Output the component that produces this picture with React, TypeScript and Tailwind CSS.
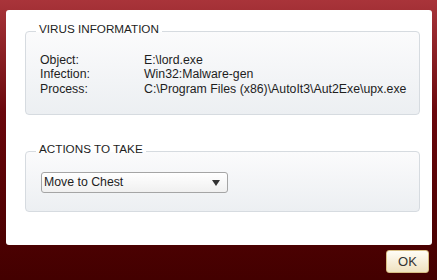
export default function App() {
  return (
    <div className="w-[437px] h-[280px] bg-gradient-to-b from-[#a9343a] via-[#6a070c] via-40% to-[#430000] pt-[10px] pl-[6px] pr-[5px] font-['Liberation_Sans',Arial,sans-serif] text-[12.3px] text-[#1e1e1e] flex flex-col">
      <div className="h-[235px] bg-white rounded-[3px] pt-[12px] pl-[19px] pr-[12px] flex flex-col">
        <GroupBox title="VIRUS INFORMATION" className="h-[93px]">
          <div className="grid grid-cols-[104px_1fr] pl-[4px] pt-[12px] leading-[14.3px]">
            <span>Object:</span>
            <span>E:\lord.exe</span>
            <span>Infection:</span>
            <span>Win32:Malware-gen</span>
            <span>Process:</span>
            <span>C:\Program Files (x86)\AutoIt3\Aut2Exe\upx.exe</span>
          </div>
        </GroupBox>

        <GroupBox title="ACTIONS TO TAKE" className="h-[70px] mt-[27px]">
          <div className="pl-[5px] pt-[11px]">
            <div className="w-[187px] h-[21px] rounded-[3px] border border-[#a5a5a5] bg-gradient-to-b from-white to-[#f0f0f0] flex items-center justify-between pl-[2px] pr-[7px]">
              <span>Move to Chest</span>
              <svg width="8" height="6" viewBox="0 0 8 6">
                <path d="M0 0 H8 L4 6 Z" fill="#333" />
              </svg>
            </div>
          </div>
        </GroupBox>
      </div>

      <div className="flex justify-end pr-[3px] pt-[5px]">
        <button className="w-[43px] h-[23px] rounded-[3px] border border-[#d8bf85] bg-gradient-to-b from-[#fffdf6] to-[#efe1bf] text-[13px] text-[#333] flex items-center justify-center">
          OK
        </button>
      </div>
    </div>
  );
}

function GroupBox({
  title,
  className,
  children,
}: {
  title: string;
  className?: string;
  children: React.ReactNode;
}) {
  return (
    <fieldset
      className={`border border-[#d6dbe0] rounded-[4px] bg-gradient-to-b from-[#fbfbfc] to-[#eceff2] pl-[10px] ${className}`}
    >
      <legend className="px-[3px] pb-[5px] text-[11.7px] leading-[14px] text-[#1e1e1e]">
        {title}
      </legend>
      {children}
    </fieldset>
  );
}
